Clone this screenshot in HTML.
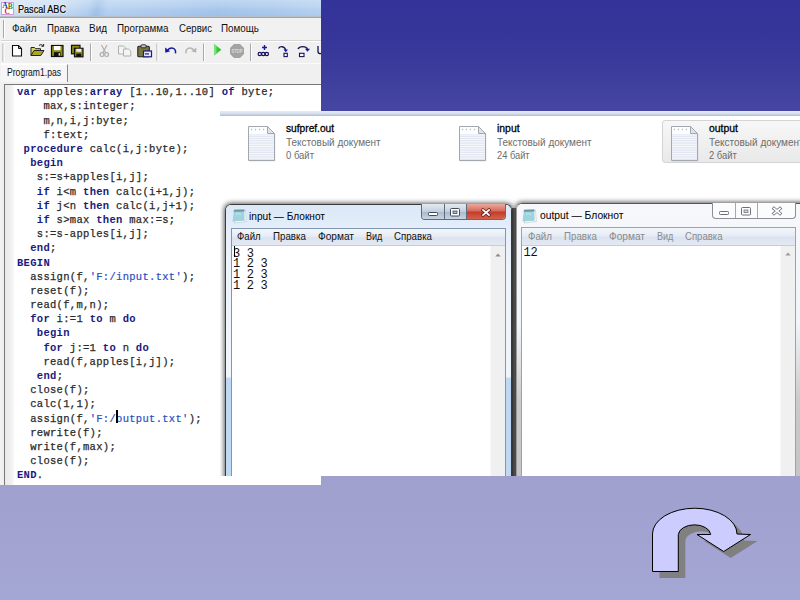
<!DOCTYPE html>
<html lang="ru">
<head>
<meta charset="utf-8">
<title>Pascal ABC</title>
<style>
html,body{margin:0;padding:0;}
body{width:800px;height:600px;overflow:hidden;position:relative;
  background:linear-gradient(to bottom,#333399 0px,#343499 22px,#3a3a9c 62px,#4646a2 112px,#a0a0cf 476px,#a4a6d4 600px);
  font-family:"Liberation Sans",sans-serif;}
.abs{position:absolute;}
/* ---------- Pascal ABC window ---------- */
#pabc{left:0;top:0;width:321px;height:485px;background:#f0f0f0;overflow:hidden;}
#pabc .title{left:0;top:0;width:321px;height:16px;background:linear-gradient(to bottom,rgba(255,255,255,.28) 0,rgba(255,255,255,.1) 45%,rgba(255,255,255,0) 60%,rgba(120,150,200,.12) 100%),linear-gradient(100deg,#d6e5f6 0,#cadef4 60px,#b6d1f0 88px,#a4c3e9 97px,#b7d2f1 108px,#b0cdef 160px,#a6c6ec 215px,#adcbee 270px,#b6d2f1 321px);}
#pabc .title .txt{left:18px;top:1.5px;font-size:10.5px;line-height:14px;color:#000;white-space:nowrap;text-shadow:0 0 3px #fff,0 0 2px #fff;-webkit-text-stroke:.2px #000;}
#pabc .tline{left:0;top:16px;width:321px;height:2px;background:linear-gradient(to bottom,#c3ccd6,#8f99a5);}
#pabc .menu{left:0;top:18px;width:321px;height:22px;background:#f1f1f1;}
#pabc .menu span{position:absolute;top:4px;font-size:10.5px;line-height:13px;color:#111;white-space:nowrap;}
#pabc .sep1{left:0;top:40px;width:321px;height:1px;background:#d5d5d5;}
#pabc .tab{left:1px;top:64px;width:66.5px;height:18px;background:#f6f6f6;border-right:1px solid #8a8a8a;border-top:1px solid #fff;box-sizing:border-box;}
#pabc .tab span{position:absolute;left:6px;top:1px;font-size:10.5px;line-height:13px;color:#111;white-space:nowrap;}
#pabc .edit{left:4px;top:84px;width:330px;height:410px;background:#fff;border-left:1px solid #777;border-top:1px solid #777;box-sizing:border-box;}
#pabc .gutter{left:5px;top:85px;width:9px;height:400px;background:linear-gradient(to right,#eaeaea 0,#efefef 60%,#f8f8f8 100%);}
#pabc .lborder{left:0;top:19px;width:1px;height:470px;background:#f2f2f2;}
pre.code{margin:0;position:absolute;left:17px;top:85.3px;font-family:"Liberation Mono",monospace;font-size:10.5px;letter-spacing:.3px;line-height:14.19px;color:#2a2a2a;-webkit-text-stroke:.25px #2a2a2a;white-space:pre;}
pre.code b{color:#1a1a80;font-weight:bold;-webkit-text-stroke:0;}
pre.code i{color:#2a4fc0;font-style:normal;-webkit-text-stroke:.2px #2a4fc0;}
.caret{left:116px;top:410px;width:1.5px;height:13px;background:#000;}
/* ---------- Explorer panel ---------- */
#exp{left:220px;top:111px;width:580px;height:365px;background:#fff;overflow:hidden;}
#exp .topstrip{left:0;top:0;width:580px;height:4.5px;background:linear-gradient(to bottom,#e4ebf4 0,#d6e0ec 50%,#b6c5d8 90%,#c9d4e2 100%);}
.file{position:absolute;}
.file .nm{position:absolute;left:0;top:0;font-size:11px;line-height:13px;color:#000;-webkit-text-stroke:.3px #000;white-space:nowrap;}
.file .ty{position:absolute;left:0;top:13.5px;font-size:11px;line-height:13px;color:#6d6d6d;white-space:nowrap;}
.file .sz{position:absolute;left:0;top:26.5px;font-size:11px;line-height:13px;color:#6d6d6d;white-space:nowrap;}

/* ---------- toolbar ---------- */
#tb{left:0;top:41px;}
#ticon{left:.5px;top:2px;}
/* ---------- notepad windows ---------- */
.np{position:absolute;box-sizing:border-box;border:1px solid #3c3c3c;border-bottom:none;border-radius:6px 6px 0 0;box-shadow:0 0 5px 1px rgba(0,0,0,.65);}
.np .glass{position:absolute;left:0;top:0;right:0;bottom:0;border-radius:5px 5px 0 0;}
.np .ttl{position:absolute;top:5px;font-size:10px;line-height:13px;color:#000;white-space:nowrap;}
.np .client{position:absolute;box-sizing:border-box;border:1px solid #7f98b1;border-bottom:none;background:#fff;overflow:hidden;}
.np .mbar{position:absolute;left:0;top:0;right:0;height:16.5px;background:linear-gradient(to bottom,#f3f6fb 0,#e6ecf5 45%,#dbe3f0 55%,#e3e9f3 100%);border-bottom:1px solid #c3cddb;}
.np .mbar span{position:absolute;top:2px;font-size:10px;line-height:12px;color:#111;white-space:nowrap;}
.np.inact .mbar span{color:#8a8a8a;top:3px;}
.np .sb{position:absolute;right:0;top:17.5px;width:14px;bottom:0;background:#f0f0f0;border-left:1px solid #f7f7f7;}
.np pre{position:absolute;margin:0;left:1.5px;top:20px;font-family:"Liberation Mono",monospace;font-size:12px;letter-spacing:-.325px;line-height:10.83px;color:#111;}
.np .btns{position:absolute;top:-1px;height:16px;box-sizing:border-box;border:1px solid #5d6b7a;border-top:none;border-radius:0 0 4px 4px;overflow:hidden;}
.np .btns div{position:absolute;top:0;height:15px;box-sizing:border-box;}
.t{display:inline-block;transform-origin:0 50%;}
/*FIT*/
#t_pt{left:18.00px;transform:scaleX(0.8656)}
#t_m1{left:12.00px;transform:scaleX(0.9486)}
#t_m2{left:46.50px;transform:scaleX(0.9163)}
#t_m3{left:89.00px;transform:scaleX(0.9474)}
#t_m4{left:116.50px;transform:scaleX(0.9361)}
#t_m5{left:178.50px;transform:scaleX(0.9175)}
#t_m6{left:221.00px;transform:scaleX(0.9368)}
#t_tab{left:6.00px;transform:scaleX(0.8188)}
#t_f1a{left:0.30px;transform:scaleX(0.9253)}
#t_f1b{left:0.30px;transform:scaleX(0.9081)}
#t_f1c{left:0.30px;transform:scaleX(0.8607)}
#t_f2a{left:-0.10px;transform:scaleX(0.9472)}
#t_f2b{left:-0.10px;transform:scaleX(0.9072)}
#t_f2c{left:-0.10px;transform:scaleX(0.8437)}
#t_f3a{left:0.00px;transform:scaleX(0.9479)}
#t_f3b{left:0.00px;transform:scaleX(0.9072)}
#t_f3c{left:0.00px;transform:scaleX(0.8546)}
#t_n1t{left:23.50px;transform:scaleX(1.0129)}
#t_n2t{left:23.00px;transform:scaleX(1.0291)}
#t_a1{left:5.70px;transform:scaleX(0.9596)}
#t_a2{left:41.70px;transform:scaleX(0.9710)}
#t_a3{left:86.50px;transform:scaleX(1.0132)}
#t_a4{left:134.50px;transform:scaleX(0.9064)}
#t_a5{left:162.50px;transform:scaleX(0.9685)}
#t_b1{left:6.00px;transform:scaleX(0.9759)}
#t_b2{left:42.00px;transform:scaleX(0.9710)}
#t_b3{left:86.80px;transform:scaleX(1.0132)}
#t_b4{left:134.80px;transform:scaleX(0.9064)}
#t_b5{left:163.20px;transform:scaleX(0.9583)}
/*ENDFIT*/
</style>
</head>
<body>

<!-- ================= Pascal ABC ================= -->
<div id="pabc" class="abs">
  <div class="title abs"><div class="txt abs t" id="t_pt">Pascal ABC</div></div>
  <div class="tline abs"></div>
  <div class="menu abs">
    <span class="t" id="t_m1">Файл</span>
    <span class="t" id="t_m2">Правка</span>
    <span class="t" id="t_m3">Вид</span>
    <span class="t" id="t_m4">Программа</span>
    <span class="t" id="t_m5">Сервис</span>
    <span class="t" id="t_m6">Помощь</span>
  </div>
  <div class="sep1 abs"></div>
  <div class="abs" style="left:2.500px;top:20px;width:1px;height:18px;background:#a8a8a8"></div><div class="abs" style="left:3.500px;top:20px;width:1px;height:18px;background:#fff"></div>
  <svg id="tb" class="abs" width="321" height="23" viewBox="0 0 321 23">
    <!-- top highlight + grip -->
    <rect x="0" y="0" width="321" height="1" fill="#fff"/>
    <rect x="2.5" y="2.5" width="1" height="18" fill="#a5a5a5"/><rect x="3.5" y="2.5" width="1" height="18" fill="#fff"/>
    <!-- new -->
    <path d="M12.5 4.5h6l3 3v7.5h-9z" fill="#fff" stroke="#111" stroke-width="1.1"/><path d="M18.5 4.5v3h3" fill="none" stroke="#111" stroke-width="1"/>
    <!-- open -->
    <path d="M31 14.5v-8h3.5l1 1.2h5v2.3" fill="#d8d85a" stroke="#222" stroke-width="1"/>
    <path d="M31 14.5l3-5h10l-3.2 5z" fill="#a8a820" stroke="#222" stroke-width="1"/>
    <path d="M39 4.5c1.5-1.2 3-1 4 .3M43.6 3v2.3h-2.2" fill="none" stroke="#222" stroke-width="1"/>
    <!-- save -->
    <rect x="51.5" y="4.5" width="11.5" height="11" fill="#8c8c14" stroke="#111" stroke-width="1.2"/>
    <rect x="54" y="5" width="6.5" height="4.2" fill="#fff"/><rect x="54" y="11.2" width="6.5" height="4.3" fill="#111"/><rect x="58.6" y="12.2" width="1.4" height="2.4" fill="#ddd"/>
    <!-- save all -->
    <rect x="71.5" y="4.3" width="8.5" height="8.5" fill="#8c8c14" stroke="#111" stroke-width="1.2"/>
    <rect x="74.5" y="7.3" width="8.5" height="8.5" fill="#8c8c14" stroke="#111" stroke-width="1.2"/>
    <rect x="76.3" y="7.8" width="5" height="3" fill="#eee"/><rect x="76.3" y="12.6" width="5" height="3.2" fill="#111"/>
    <!-- separators -->
    <g fill="#a8a8a8"><rect x="90" y="2.5" width="1" height="17.5"/><rect x="156.5" y="2.5" width="1" height="17.5"/><rect x="203" y="2.5" width="1" height="17.5"/><rect x="250" y="2.5" width="1" height="17.5"/></g>
    <g fill="#fff"><rect x="91" y="2.5" width="1" height="17.5"/><rect x="157.5" y="2.5" width="1" height="17.5"/><rect x="204" y="2.5" width="1" height="17.5"/><rect x="251" y="2.5" width="1" height="17.5"/></g>
    <!-- cut (disabled) -->
    <g fill="none" stroke="#adadad" stroke-width="1.2"><path d="M101.5 4l4.3 8M107 4l-4.3 8"/><circle cx="102" cy="13.6" r="1.9"/><circle cx="106.6" cy="13.6" r="1.9"/></g>
    <!-- copy (disabled) -->
    <g fill="#f4f4f4" stroke="#b0b0b0" stroke-width="1"><path d="M118.5 5h5l2 2v6h-7z"/><path d="M123.5 8h5l2.300 2v5h-7.300z"/></g>
    <!-- paste -->
    <rect x="137.800" y="5.300" width="11.500" height="10.500" rx="1" fill="#78783c" stroke="#222" stroke-width="1.100"/>
    <rect x="141" y="3.800" width="5" height="3" rx=".8" fill="#c8c8c8" stroke="#222" stroke-width=".9"/>
    <rect x="143.500" y="10" width="8" height="5.800" fill="#e8e8ff" stroke="#1c1c84" stroke-width="1.200"/><rect x="145" y="12.300" width="4" height="1.200" fill="#1c1c84"/>
    <!-- undo -->
    <path d="M175.500 12.300c.6-3.400-1.300-5.300-3.800-5.300-1.600 0-2.900.7-3.900 1.800" fill="none" stroke="#1616a0" stroke-width="1.500"/><path d="M165 6.500l.4 5.300 4.800-1.600z" fill="#1616a0"/>
    <!-- redo (disabled) -->
    <path d="M186 12.300c-.6-3.400 1.300-5.300 3.800-5.300 1.600 0 2.900.7 3.900 1.800" fill="none" stroke="#b4b4b4" stroke-width="1.500"/><path d="M196.500 6.500l-.4 5.300-4.800-1.600z" fill="#b4b4b4"/>
    <!-- run -->
    <path d="M214 3v11.500l7.500-5.750z" fill="#34c634"/><path d="M214 3v11.500l2.500-1.900v-7.700z" fill="#7be07b"/>
    <!-- stop -->
    <path d="M234 3h6l4 4v6l-4 4h-6l-4-4v-6z" fill="#a3a3a3"/>
    <text x="237" y="11.800" font-family="Liberation Sans, sans-serif" font-size="5" font-weight="bold" fill="#dcdcdc" text-anchor="middle" textLength="11" lengthAdjust="spacingAndGlyphs">STOP</text>
    <!-- trace into -->
    <g fill="none" stroke="#14145a" stroke-width="1.200"><circle cx="259.800" cy="13" r="1.700"/><circle cx="263.300" cy="13" r="1.700"/><circle cx="266.800" cy="13" r="1.700"/></g>
    <path d="M264.500 4v5M262 6.500h5" stroke="#1818a8" stroke-width="1.400" fill="none"/>
    <!-- step over -->
    <path d="M278.500 7.500c1.500-2.600 6-2.600 7.200 1.500" fill="none" stroke="#14145a" stroke-width="1.300"/><path d="M283.500 8.500h4.500l-2.200 2.800z" fill="#1818a8"/>
    <rect x="284" y="12.300" width="3.300" height="3.300" fill="#fff" stroke="#14145a" stroke-width="1.100"/>
    <!-- step out -->
    <path d="M298 8c1.500-3.200 8-3.200 9.500 0" fill="none" stroke="#14145a" stroke-width="1.300"/><path d="M305 7.800h5l-2.500 3z" fill="#1818a8"/>
    <rect x="299.500" y="12.300" width="4.500" height="3.300" fill="#fff" stroke="#14145a" stroke-width="1.100"/>
    <!-- cut-off icon -->
    <path d="M318 5v5.500c0 1.500 1 2.200 3 2.200" fill="none" stroke="#14145a" stroke-width="1.300"/>
  </svg>
  <svg id="ticon" class="abs" width="13" height="13" viewBox="0 0 13 13">
    <rect x=".5" y=".5" width="12" height="12" fill="#fff" stroke="#d79ad7" stroke-width="1"/>
    <text x="1.200" y="6.300" font-family="Liberation Serif, serif" font-size="7.500" font-weight="bold" fill="#2a2ab8">A</text>
    <text x="6.800" y="7.300" font-family="Liberation Serif, serif" font-size="7.500" font-weight="bold" fill="#1e961e">B</text>
    <text x="3.600" y="12" font-family="Liberation Serif, serif" font-size="7.500" font-weight="bold" fill="#d22a2a">C</text>
  </svg>
  <div class="abs" style="left:0;top:63px;width:321px;height:1px;background:#fbfbfb"></div>
  <div class="tab abs"><span class="t" id="t_tab">Program1.pas</span></div>
  <div class="edit abs"></div>
  <div class="gutter abs"></div>
  <div class="lborder abs"></div>
<pre class="code"><b>var</b> apples:<b>array</b> [1..10,1..10] <b>of</b> byte;
    max,s:integer;
    m,n,i,j:byte;
    f:text;
 <b>procedure</b> calc(i,j:byte);
  <b>begin</b>
   s:=s+apples[i,j];
   <b>if</b> i&lt;m <b>then</b> calc(i+1,j);
   <b>if</b> j&lt;n <b>then</b> calc(i,j+1);
   <b>if</b> s&gt;max <b>then</b> max:=s;
   s:=s-apples[i,j];
  <b>end</b>;
<b>BEGIN</b>
  assign(f,<i>'F:/input.txt'</i>);
  reset(f);
  read(f,m,n);
  <b>for</b> i:=1 <b>to</b> m <b>do</b>
   <b>begin</b>
    <b>for</b> j:=1 <b>to</b> n <b>do</b>
    read(f,apples[i,j]);
   <b>end</b>;
  close(f);
  calc(1,1);
  assign(f,<i>'F:/output.txt'</i>);
  rewrite(f);
  write(f,max);
  close(f);
<b>END</b>.</pre>
  <div class="caret abs"></div>
</div>

<!-- ================= Explorer panel ================= -->
<div id="exp" class="abs">
  <div class="topstrip abs"></div>

  <div class="abs" style="left:441.500px;top:9px;width:150px;height:43px;box-sizing:border-box;border:1px solid #d4d4d4;border-radius:3px;background:linear-gradient(to bottom,#f7f7f7,#e9e9e9);"></div>
<svg class="abs" style="left:27.5px;top:14.5px" width="29" height="37" viewBox="0 0 29 37">
      <path d="M1.200 1.200h19l7 7v27h-26z" fill="#b9bcc2" opacity=".7"/>
      <path d="M.5 .5h19l7 7v27h-26z" fill="#fcfdfe" stroke="#a3a8b0" stroke-width="1"/>
      <rect x="1" y="8" width="25" height="26" fill="#e1e6f1"/>
      <rect x="1" y="8.60" width="25" height=".9" fill="#fbfcfe"/><rect x="1" y="10.90" width="25" height=".9" fill="#fbfcfe"/><rect x="1" y="13.20" width="25" height=".9" fill="#fbfcfe"/><rect x="1" y="15.50" width="25" height=".9" fill="#fbfcfe"/><rect x="1" y="17.80" width="25" height=".9" fill="#fbfcfe"/><rect x="1" y="20.10" width="25" height=".9" fill="#fbfcfe"/><rect x="1" y="22.40" width="25" height=".9" fill="#fbfcfe"/><rect x="1" y="24.70" width="25" height=".9" fill="#fbfcfe"/><rect x="1" y="27.00" width="25" height=".9" fill="#fbfcfe"/><rect x="1" y="29.30" width="25" height=".9" fill="#fbfcfe"/><rect x="1" y="31.60" width="25" height=".9" fill="#fbfcfe"/>
      <path d="M19.5 .5v7h7z" fill="#dfe2e7" stroke="#a3a8b0" stroke-width="1"/>
      <path d="M3.500 2.800v1.400M7.500 2.800v1.400M11.500 2.800v1.400M15.500 2.800v1.400" stroke="#bcc1c9" stroke-width="1.300"/>
    </svg><svg class="abs" style="left:239px;top:14.5px" width="29" height="37" viewBox="0 0 29 37">
      <path d="M1.200 1.200h19l7 7v27h-26z" fill="#b9bcc2" opacity=".7"/>
      <path d="M.5 .5h19l7 7v27h-26z" fill="#fcfdfe" stroke="#a3a8b0" stroke-width="1"/>
      <rect x="1" y="8" width="25" height="26" fill="#e1e6f1"/>
      <rect x="1" y="8.60" width="25" height=".9" fill="#fbfcfe"/><rect x="1" y="10.90" width="25" height=".9" fill="#fbfcfe"/><rect x="1" y="13.20" width="25" height=".9" fill="#fbfcfe"/><rect x="1" y="15.50" width="25" height=".9" fill="#fbfcfe"/><rect x="1" y="17.80" width="25" height=".9" fill="#fbfcfe"/><rect x="1" y="20.10" width="25" height=".9" fill="#fbfcfe"/><rect x="1" y="22.40" width="25" height=".9" fill="#fbfcfe"/><rect x="1" y="24.70" width="25" height=".9" fill="#fbfcfe"/><rect x="1" y="27.00" width="25" height=".9" fill="#fbfcfe"/><rect x="1" y="29.30" width="25" height=".9" fill="#fbfcfe"/><rect x="1" y="31.60" width="25" height=".9" fill="#fbfcfe"/>
      <path d="M19.5 .5v7h7z" fill="#dfe2e7" stroke="#a3a8b0" stroke-width="1"/>
      <path d="M3.500 2.800v1.400M7.500 2.800v1.400M11.500 2.800v1.400M15.500 2.800v1.400" stroke="#bcc1c9" stroke-width="1.300"/>
    </svg><svg class="abs" style="left:451px;top:14.5px" width="29" height="37" viewBox="0 0 29 37">
      <path d="M1.200 1.200h19l7 7v27h-26z" fill="#b9bcc2" opacity=".7"/>
      <path d="M.5 .5h19l7 7v27h-26z" fill="#fcfdfe" stroke="#a3a8b0" stroke-width="1"/>
      <rect x="1" y="8" width="25" height="26" fill="#e1e6f1"/>
      <rect x="1" y="8.60" width="25" height=".9" fill="#fbfcfe"/><rect x="1" y="10.90" width="25" height=".9" fill="#fbfcfe"/><rect x="1" y="13.20" width="25" height=".9" fill="#fbfcfe"/><rect x="1" y="15.50" width="25" height=".9" fill="#fbfcfe"/><rect x="1" y="17.80" width="25" height=".9" fill="#fbfcfe"/><rect x="1" y="20.10" width="25" height=".9" fill="#fbfcfe"/><rect x="1" y="22.40" width="25" height=".9" fill="#fbfcfe"/><rect x="1" y="24.70" width="25" height=".9" fill="#fbfcfe"/><rect x="1" y="27.00" width="25" height=".9" fill="#fbfcfe"/><rect x="1" y="29.30" width="25" height=".9" fill="#fbfcfe"/><rect x="1" y="31.60" width="25" height=".9" fill="#fbfcfe"/>
      <path d="M19.5 .5v7h7z" fill="#dfe2e7" stroke="#a3a8b0" stroke-width="1"/>
      <path d="M3.500 2.800v1.400M7.500 2.800v1.400M11.500 2.800v1.400M15.500 2.800v1.400" stroke="#bcc1c9" stroke-width="1.300"/>
    </svg>
  <div class="file" style="left:65.500px;top:11px"><div class="nm t" id="t_f1a">sufpref.out</div><div class="ty t" id="t_f1b">Текстовый документ</div><div class="sz t" id="t_f1c">0 байт</div></div>
  <div class="file" style="left:277.500px;top:11px"><div class="nm t" id="t_f2a">input</div><div class="ty t" id="t_f2b">Текстовый документ</div><div class="sz t" id="t_f2c">24 байт</div></div>
  <div class="file" style="left:489px;top:11px"><div class="nm t" id="t_f3a">output</div><div class="ty t" id="t_f3b">Текстовый документ</div><div class="sz t" id="t_f3c">2 байт</div></div>

  <div class="abs" style="left:291.500px;top:97px;width:5px;height:280px;background:linear-gradient(to right,#5a5a5a,#7c7c7c 40%,#8c8c8c);"></div>
  <!-- input notepad (active) : abs x 224.5..511.5, y 203.5.. -->
  <div class="np" style="left:4.500px;top:92.500px;width:287px;height:290px;">
    <div class="glass" style="background:linear-gradient(to bottom,#dbe8f7 0,#e5eefa 24px,#eef4fb 60px,#f0f5fc 172px,#bfd9f4 173px,#bfd9f4 100%);"></div>
    <svg class="abs" style="left:6.5px;top:4px" width="15" height="15" viewBox="0 0 15 15">
      <path d="M3 1.500l10.500-.3.800 11.300-11.800 1.500z" fill="#fdfefe" stroke="#b8c4cc" stroke-width=".6"/>
      <path d="M2 .8l10.300-.3.400 11.300-12.200.6z" fill="#9fd3de"/>
      <path d="M2 .8l10.300-.3.100 2-10.700.3z" fill="#6e97a4"/>
      <path d="M4 5.500c1.500-1.200 3.500-1 5 .2" fill="none" stroke="#d5eef2" stroke-width=".8"/>
    </svg>
    <div class="ttl t" id="t_n1t">input — Блокнот</div>
    <div class="btns" style="left:195px;width:85px;">
      <div style="left:0;width:23px;background:linear-gradient(to bottom,#e3e9f1,#c4cfdd 50%,#a9b8ca 51%,#c6d3e3);border-right:1px solid #5d6b7a;"></div>
      <div style="left:23px;width:22px;background:linear-gradient(to bottom,#e3e9f1,#c4cfdd 50%,#a9b8ca 51%,#c6d3e3);border-right:1px solid #5d6b7a;"></div>
      <div style="left:45px;width:40px;background:linear-gradient(to bottom,#e9a99d,#d7685a 48%,#c43a2a 52%,#d5614a);"></div>
    </div>
    <svg class="abs" style="left:195px;top:0" width="85" height="15" viewBox="0 0 85 15">
      <rect x="7.500" y="7.500" width="9" height="3" rx=".8" fill="#fff" stroke="#3f4a58" stroke-width="1"/>
      <rect x="29.500" y="3.500" width="9" height="7.500" rx="1" fill="#fff" stroke="#3f4a58" stroke-width="1"/><rect x="32" y="6" width="4" height="2.500" fill="#aab8ca" stroke="#3f4a58" stroke-width=".8"/>
      <path d="M62 5l6 5M68 5l-6 5" stroke="#5a2018" stroke-width="3.200" stroke-linecap="square"/><path d="M62 5l6 5M68 5l-6 5" stroke="#fff" stroke-width="1.700" stroke-linecap="square"/>
    </svg>
    <div class="client" style="left:5px;top:23px;width:275px;height:270px;">
      <div class="mbar"><span class="t" id="t_a1">Файл</span><span class="t" id="t_a2">Правка</span><span class="t" id="t_a3">Формат</span><span class="t" id="t_a4">Вид</span><span class="t" id="t_a5">Справка</span></div>
      <div class="sb"><svg class="abs" style="left:4px;top:6.500px" width="6" height="4" viewBox="0 0 6 4"><path d="M.3 3.500l2.700-3 2.700 3z" fill="#8a8a8a"/></svg></div>
<pre>3 3
1 2 3
1 2 3
1 2 3</pre>
      <div class="abs" style="left:2px;top:17.500px;width:1px;height:11px;background:#000"></div>
    </div>
  </div>

  <!-- output notepad (inactive) : abs x 516.5.., y 203.. -->
  <div class="np inact" style="left:296px;top:92px;width:300px;height:290px;border-color:#555 #555 #555 #9a9a9a;">
    <div class="glass" style="background:linear-gradient(to bottom,#f6f8fb 0,#f1f4f8 120px,#c9c9c9 200px,#c4c4c4 100%);"></div>
    <svg class="abs" style="left:5px;top:4.5px" width="15" height="15" viewBox="0 0 15 15">
      <path d="M3 1.500l10.500-.3.800 11.300-11.800 1.500z" fill="#fdfefe" stroke="#b8c4cc" stroke-width=".6"/>
      <path d="M2 .8l10.300-.3.400 11.300-12.200.6z" fill="#9fd3de"/>
      <path d="M2 .8l10.300-.3.100 2-10.700.3z" fill="#6e97a4"/>
      <path d="M4 5.500c1.500-1.200 3.500-1 5 .2" fill="none" stroke="#d5eef2" stroke-width=".8"/>
    </svg>
    <div class="ttl t" id="t_n2t">output — Блокнот</div>
    <div class="btns" style="left:194.500px;width:84.500px;border-color:#8a8f96;background:#fbfcfd;">
      <div style="left:0;width:23px;border-right:1px solid #a5a9ae;"></div>
      <div style="left:23px;width:22px;border-right:1px solid #a5a9ae;"></div>
    </div>
    <svg class="abs" style="left:194.500px;top:0" width="85" height="15" viewBox="0 0 85 15">
      <rect x="7.500" y="7.500" width="9" height="3" rx=".8" fill="#fff" stroke="#6a6f78" stroke-width="1"/>
      <rect x="29.500" y="3.500" width="9" height="7.500" rx="1" fill="#fff" stroke="#6a6f78" stroke-width="1"/><rect x="32" y="6" width="4" height="2.500" fill="#d5d9de" stroke="#6a6f78" stroke-width=".8"/>
      <path d="M62 4.500l6 5M68 4.500l-6 5" stroke="#6a6f78" stroke-width="3.200" stroke-linecap="square"/><path d="M62 4.500l6 5M68 4.500l-6 5" stroke="#fff" stroke-width="1.700" stroke-linecap="square"/>
    </svg>
    <div class="client c2" style="left:4px;top:23px;width:275px;height:270px;border-color:#9aa3ad;">
      <div class="mbar"><span class="t" id="t_b1">Файл</span><span class="t" id="t_b2">Правка</span><span class="t" id="t_b3">Формат</span><span class="t" id="t_b4">Вид</span><span class="t" id="t_b5">Справка</span></div>
      <div class="sb"><svg class="abs" style="left:4px;top:6.500px" width="6" height="4" viewBox="0 0 6 4"><path d="M.3 3.500l2.700-3 2.700 3z" fill="#9a9a9a"/></svg></div>
<pre>12</pre>
    </div>
  </div>
</div>


<!-- ================= U-turn arrow ================= -->
<svg class="abs" style="left:640px;top:500px" width="130" height="90" viewBox="640 500 130 90">
  <path id="uarrow" d="M652.500 571.500V534A42.250 25.800 0 0 1 737 534L750.500 534.500L723.700 551.500L697 534.500L710.700 534.500A16.250 10.500 0 0 0 678.300 534.500V571.500Z" fill="#808080" transform="translate(7,6.500)"/>
  <path d="M652.500 571.500V534A42.250 25.800 0 0 1 737 534L750.500 534.500L723.700 551.500L697 534.500L710.700 534.500A16.250 10.500 0 0 0 678.300 534.500V571.500Z" fill="#ccccff" stroke="#000" stroke-width="1"/>
</svg>

</body>
</html>
